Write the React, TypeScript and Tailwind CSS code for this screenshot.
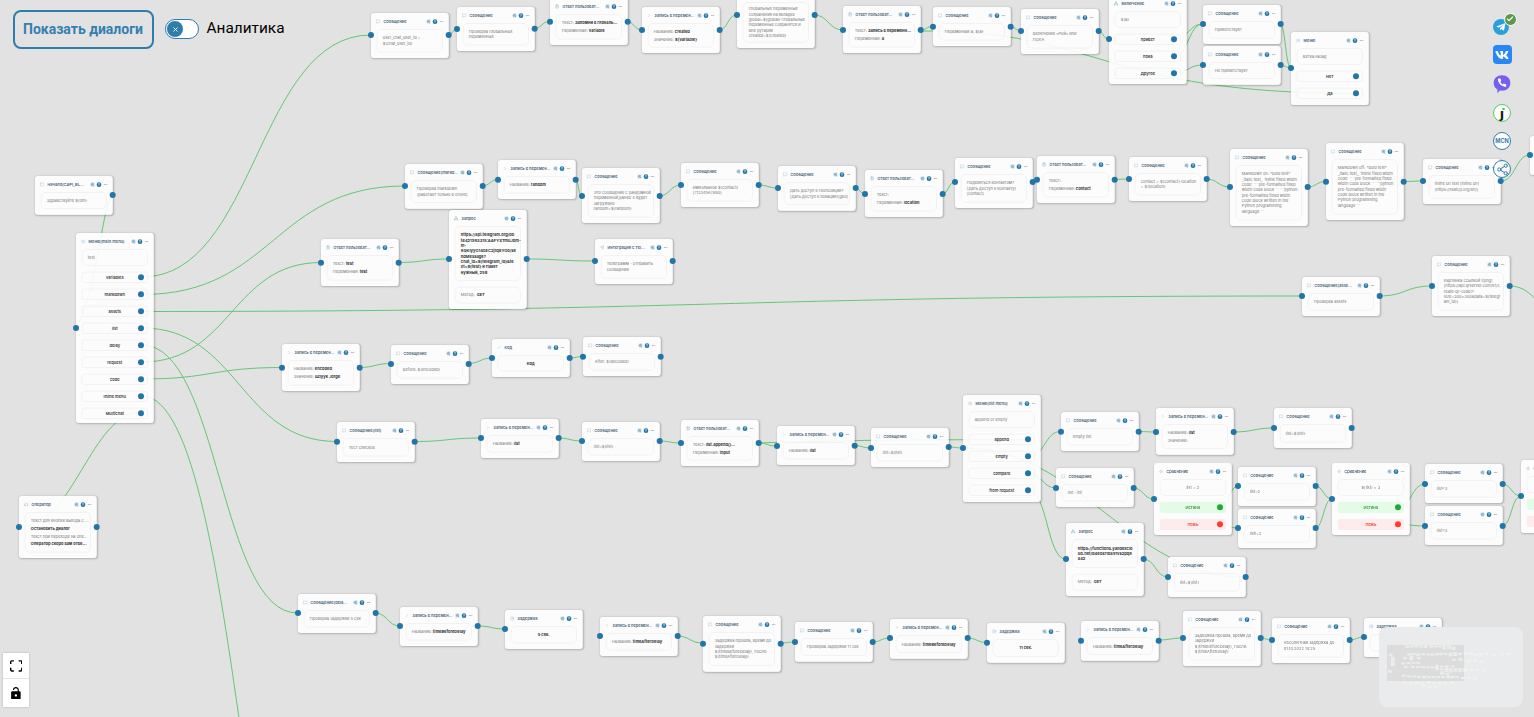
import React from 'react';
import { MessageSquare, ChevronRight, ClipboardList, Network, Check, Zap, Clock, List, Square, SlidersHorizontal, Share2, X, Headphones, Send, Ellipsis } from 'lucide-react';
import { FaTelegramPlane, FaVk } from 'react-icons/fa';

type Row = string | [string, string];
type Btn = { label: string; tone?: 'ok' | 'no' };
type Nd = {
  x: number; y: number; h: number; t: string; i: string;
  l?: number; r?: number;
  b?: Row[]; c?: boolean; strong?: boolean;
  m?: string;
  btn?: Btn[];
};

const N: Nd[] = [
  // top line
  { x: 371, y: 13, h: 45, t: 'Сообщение', i: 'm', l: 35, r: 35, b: ['user_chat_user_id =', '${chat_user_id}'] },
  { x: 457, y: 7, h: 44, t: 'Сообщение', i: 'm', l: 29, r: 28.5, b: ['Проверка глобальных', 'переменных'] },
  { x: 549.5, y: -2, h: 47, t: 'Ответ пользоват...', i: 'a', l: 21.5, r: 21.5, b: [['Текст: ', 'Запомни в глобаль...'], ['Переменная: ', 'variable']] },
  { x: 642, y: 7, h: 46, t: 'Запись в перемен...', i: 'w', l: 30, r: 30, b: [['Название: ', 'created'], ['Значение: ', '${variable}']] },
  { x: 736.5, y: -14, h: 62, t: 'Сообщение', i: 'm', l: 15, r: 15, b: ['глобальных переменных', 'сохранения на вкладке', 'global=${global} глобальные', 'переменные сохранятся и', 'вне рутарии', 'created=${created}'] },
  { x: 843, y: 6, h: 47, t: 'Ответ пользоват...', i: 'a', l: 30, r: 30, b: [['Текст: ', 'Запись в переменн...'], ['Переменная: ', 'a']] },
  { x: 933, y: 7, h: 39, t: 'Сообщение', i: 'm', l: 26.5, r: 26.5, b: ['Переменная a: ${a}'] },
  { x: 1021, y: 9, h: 45, t: 'Сообщение', i: 'm', l: 31, r: 31, b: ['Включение «Рой» или', 'ПОКА'] },
  { x: 1108.5, y: -5, h: 89, t: 'Включение', i: 'n', l: 39, b: ['${a}'], btn: [{ label: 'привет' }, { label: 'пока' }, { label: 'Другое' }] },
  { x: 1203, y: 5, h: 39, t: 'Сообщение', i: 'm', l: 24, r: 24, b: ['Приветствует'] },
  { x: 1203, y: 46, h: 38.5, t: 'Сообщение', i: 'm', l: 65, r: 65, b: ['Не приветствует'] },
  { x: 1291, y: 32, h: 73, t: 'Меню', i: 'l', l: 68, b: ['Ветка назад'], btn: [{ label: 'Нет' }, { label: 'Да' }] },
  // left side
  { x: 34.5, y: 176, h: 38.5, t: 'Начало(CAPI_BL...', i: 's', r: 195, b: ['Здравствуйте ${om}'] },
  { x: 76, y: 233, h: 190, t: 'Меню(main menu)', i: 'l', l: 328, b: ['test'], btn: [{ label: 'variables' }, { label: 'markdown' }, { label: 'assets' }, { label: 'list' }, { label: 'delay' }, { label: 'request' }, { label: 'code' }, { label: 'Inline menu' }, { label: 'Multichat' }] },
  { x: 18.5, y: 496, h: 62, t: 'Оператор', i: 'o', l: 527, r: 527, b: [['Текст для кнопки выхода с ...', ''], ['', 'Остановить диалог'], ['Текст при переходе на опе...', ''], ['', 'Оператор скоро вам отве...']] },
  // markdown row
  { x: 405, y: 164, h: 44.5, t: 'Сообщение(markd...', i: 'm', l: 186, r: 186, b: ['Проверка markdown', '(работает только в отоне)'] },
  { x: 498, y: 160, h: 39, t: 'Запись в перемен...', i: 'w', l: 179.5, r: 179.5, b: [['Название: ', 'random']] },
  { x: 582, y: 168, h: 55, t: 'Сообщение', i: 'm', l: 196, r: 196, b: ['Это сообщение с рандомной', 'переменной,ранее 4 будет', 'загружено', 'random=${random}'] },
  { x: 681, y: 163, h: 44, t: 'Сообщение', i: 'm', l: 185, r: 185, b: ['Имя:Иванов ${contact}', '(71234567890)'] },
  { x: 778, y: 166, h: 44.5, t: 'Сообщение', i: 'm', l: 188, r: 188, b: ['Дать доступ к геопозиции?', '[Дать доступ к локации](geo)'] },
  { x: 865, y: 170, h: 47, t: 'Ответ пользоват...', i: 'a', l: 194, r: 194, b: [['Текст:', ''], ['Переменная: ', 'location']] },
  { x: 955, y: 158, h: 50, t: 'Сообщение', i: 'm', l: 182, r: 182, b: ['Поделиться контактом?', '[Дать доступ к контакту]', '(contact)'] },
  { x: 1037, y: 156, h: 47, t: 'Ответ пользоват...', i: 'a', l: 179.5, r: 179.5, b: [['Текст:', ''], ['Переменная: ', 'contact']] },
  { x: 1129, y: 157, h: 44, t: 'Сообщение', i: 'm', l: 179, r: 179, b: ['contact = ${contact} location', '= ${location}'] },
  { x: 1230, y: 149, h: 77, t: 'Сообщение', i: 'm', l: 187, r: 187, b: ['Markdown on: *bold test*', '_italic test_ `inline fixed width', 'code` ``` pre-formatted fixed', 'width code block ``` ```python', 'pre-formatted fixed width', 'code block written in the', 'Python programming', 'language ```'] },
  { x: 1326, y: 143, h: 77, t: 'Сообщение', i: 'm', l: 181.5, r: 181.5, b: ['Markdown off: *bold test*', '_italic test_ `inline fixed width', 'code` ``` pre-formatted fixed', 'width code block ``` ```python', 'pre-formatted fixed width', 'code block written in the', 'Python programming', 'language ```'] },
  { x: 1423, y: 159, h: 45, t: 'Сообщение', i: 'm', l: 181, r: 181, b: ['inline url test [inline url]', '(https://reatcp.org/en/)'] },
  { x: 1530, y: 136, h: 39, t: '', i: 'e', l: 155, b: [] },
  // request row
  { x: 321, y: 239, h: 47, t: 'Ответ пользоват...', i: 'a', l: 262.5, r: 262.5, b: [['Текст: ', 'test'], ['Переменная: ', 'test']] },
  { x: 448.5, y: 210, h: 99, t: 'Запрос', i: 'n', l: 259, r: 259, strong: true, m: 'GET', b: ['https://api.telegram.org/bo', 't6421983315:AAFYXTmuJbm-', 'm-', '8QKIyyG140EC2j1qSYOo/se', 'ndMessage?', 'chat_id=${telegram_id}&te', 'xt=${test} и Пакет', 'нужный, 25$'] },
  { x: 595, y: 239, h: 45, t: 'Интеграция с Tel...', i: 'p', l: 261, r: 261, b: ['Телеграмм - отправить', 'сообщение'] },
  { x: 1301.5, y: 277, h: 39, t: 'Сообщение(asse...', i: 'm', l: 296, r: 296, b: ['Проверка assets'] },
  { x: 1432, y: 256, h: 60, t: 'Сообщение', i: 'm', l: 286, r: 286, b: ['Картинка ссылкой ![png]', '(https://api.qrserver.com/v1/c', 'reate-qr-code/?', 'size=300x300&data=${telegr', 'am_id})'] },
  // code row
  { x: 282, y: 344, h: 47, t: 'Запись в перемен...', i: 'w', l: 367.5, r: 367.5, b: [['Название: ', 'encoded'], ['Значение: ', 'Шзууk Jorge']] },
  { x: 391, y: 344.5, h: 39, t: 'Сообщение', i: 'm', l: 363.5, r: 363.5, b: ['Before: ${encoded}'] },
  { x: 492, y: 339, h: 38, t: 'Код', i: 'c', l: 358, r: 358, c: true, strong: true, b: ['Код'] },
  { x: 583, y: 337, h: 39, t: 'Сообщение', i: 'm', l: 356.5, r: 356.5, b: ['After: ${decoded}'] },
  // list row
  { x: 337, y: 422, h: 40, t: 'Сообщение(list)', i: 'm', l: 441.5, r: 441.5, b: ['Тест списков'] },
  { x: 481, y: 419, h: 39, t: 'Запись в перемен...', i: 'w', l: 438, r: 438, b: [['Название: ', 'list']] },
  { x: 582, y: 422, h: 39, t: 'Сообщение', i: 'm', l: 441, r: 441, b: ['list=${list}'] },
  { x: 681, y: 420, h: 46, t: 'Ответ пользоват...', i: 'a', l: 443, r: 443, b: [['Текст: ', 'list.append()...'], ['Переменная: ', 'input']] },
  { x: 776.5, y: 426, h: 39, t: 'Запись в перемен...', i: 'w', l: 446, r: 445.5, b: [['Название: ', 'list']] },
  { x: 871, y: 428, h: 39, t: 'Сообщение', i: 'm', l: 448, r: 447, b: ['list=${list}'] },
  { x: 963, y: 395, h: 107, t: 'Меню(list menu)', i: 'l', l: 448, b: ['append or empty'], btn: [{ label: 'append' }, { label: 'empty' }, { label: 'compare' }, { label: 'from request' }] },
  { x: 1060.5, y: 412, h: 39, t: 'Сообщение', i: 'm', l: 431.5, r: 431.5, b: ['empty list'] },
  { x: 1156, y: 408, h: 46.5, t: 'Запись в перемен...', i: 'w', l: 432, r: 432, b: [['Название: ', 'list'], ['Значение:', '']] },
  { x: 1274, y: 408, h: 40, t: 'Сообщение', i: 'm', l: 428, r: 428, b: ['list=${list}'] },
  { x: 1056, y: 468, h: 39, t: 'Сообщение', i: 'm', l: 488, r: 488, b: ['list - int'] },
  { x: 1154, y: 463, h: 72, t: 'Сравнение', i: 'z', l: 499, c: true, b: ['list = 2'], btn: [{ label: 'Истина', tone: 'ok' }, { label: 'Ложь', tone: 'no' }] },
  { x: 1238, y: 467, h: 39, t: 'Сообщение', i: 'm', l: 486, r: 486, b: ['list=2'] },
  { x: 1238, y: 509, h: 39, t: 'Сообщение', i: 'm', l: 528, r: 528, b: ['list!=2'] },
  { x: 1332, y: 463, h: 72, t: 'Сравнение', i: 'z', l: 499, c: true, b: ['${list} < 3'], btn: [{ label: 'Истина', tone: 'ok' }, { label: 'Ложь', tone: 'no' }] },
  { x: 1425, y: 464, h: 39, t: 'Сообщение', i: 'm', l: 484, r: 484, b: ['list<3'] },
  { x: 1425, y: 506, h: 39, t: 'Сообщение', i: 'm', l: 526, r: 526, b: ['list>3'] },
  { x: 1521, y: 460, h: 73, t: 'Сравнение', i: 'z', l: 496, c: true, b: ['list'], btn: [{ label: 'Истина', tone: 'ok' }, { label: 'Ложь', tone: 'no' }] },
  { x: 1065.5, y: 523, h: 73, t: 'Запрос', i: 'n', l: 559, r: 559, strong: true, m: 'GET', b: ['https://functions.yandexclo', 'ud.net/d4eos7lba91vs2pq8', 'a42'] },
  { x: 1168, y: 557, h: 40, t: 'Сообщение', i: 'm', l: 577, r: 577, b: ['list=${list}'] },
  // bottom row
  { x: 297.5, y: 594, h: 39, t: 'Сообщение(dela...', i: 'm', l: 613, r: 613, b: ['Проверка задержки 5 сек'] },
  { x: 400, y: 607, h: 39, t: 'Запись в перемен...', i: 'w', l: 626, r: 626, b: [['Название: ', 'timeBeforeDelay']] },
  { x: 505, y: 610, h: 39, t: 'Задержка', i: 'd', l: 629, c: true, strong: true, b: ['5 сек.'] },
  { x: 600, y: 617, h: 39, t: 'Запись в перемен...', i: 'w', l: 636, r: 636, b: [['Название: ', 'timeAfterDelay']] },
  { x: 702.5, y: 615.5, h: 55.5, t: 'Сообщение', i: 'm', l: 643, r: 643, b: ['Задержка прошла, время до', 'задержки', '${timeBeforeDelay}, после:', '${timeAfterDelay}'] },
  { x: 795, y: 622, h: 39.5, t: 'Сообщение', i: 'm', l: 642, r: 642, b: ['Проверка задержки 11 сек'] },
  { x: 890, y: 619, h: 39.5, t: 'Запись в перемен...', i: 'w', l: 638, r: 638, b: [['Название: ', 'timeBeforeDelay']] },
  { x: 987, y: 623, h: 39.5, t: 'Задержка', i: 'd', l: 642.5, c: true, strong: true, b: ['11 сек.'] },
  { x: 1080.5, y: 620.5, h: 39.5, t: 'Запись в перемен...', i: 'w', l: 640, r: 640, b: [['Название: ', 'timeAfterDelay']] },
  { x: 1183, y: 611, h: 55, t: 'Сообщение', i: 'm', l: 638, r: 638, b: ['Задержка прошла, время до', 'задержки', '${timeBeforeDelay}, после:', '${timeAfterDelay}'] },
  { x: 1272, y: 618, h: 45, t: 'Сообщение', i: 'm', l: 640, r: 640, b: ['Абсолютная задержка до', '01.10.2022 14:25'] },
  { x: 1364, y: 618, h: 39, t: 'Задержка', i: 'd', l: 637, c: true, strong: true, b: ['Н'] },
];

// straight source → target pairs: bezier as drawn by the flow library
const E: [number, number, number, number][] = [
  [142, 277, 371, 35], [142, 294.5, 405, 186], [142, 311.5, 1302, 296], [142, 328, 337, 441.5], [142, 345, 297.5, 613],
  [142, 362, 321, 262.5], [142, 379, 282, 367.5], [142, 396, 350, 1140],
  [448, 35, 457, 29], [534, 28.5, 549.5, 21.5], [626.5, 21.5, 642, 30], [719, 30, 736.5, 15], [814, 15, 843, 30], [920, 30, 933, 26.5],
  [1010, 26.5, 1021, 31], [1098, 31, 1108.5, 39], [1174, 39.5, 1203, 24], [1174, 56, 1203, 24], [1174, 73, 1203, 65], [1280, 24, 1291, 68], [1280, 65, 1291, 68],
  [482, 186, 498, 179.5], [575, 179.5, 582, 196], [659, 196, 681, 185], [758, 185, 778, 188], [855, 188, 865, 194], [942, 194, 955, 182],
  [1032, 182, 1037, 179.5], [1114, 179.5, 1129, 179], [1206, 179, 1230, 187], [1307, 187, 1326, 181.5], [1403, 181.5, 1423, 181], [1501, 181, 1530, 155],
  [398, 262.5, 449, 259], [526, 259, 595, 261], [1379, 296, 1432, 286], [1509, 286, 1560, 310],
  [359, 367.5, 391, 363.5], [468, 363.5, 492, 358], [569.5, 358, 583, 356.5],
  [414, 441.5, 481, 438], [558, 438, 582, 441], [659, 441, 681, 443], [758, 443, 776.5, 446], [854, 445.5, 871, 448], [948, 447, 963, 448],
  [1029, 456.7, 1060.5, 431.5], [1029, 473.7, 1056, 488], [1029, 490.7, 1065.5, 559],
  [1138, 431.5, 1156, 432], [1233, 432, 1274, 428], [1133, 488, 1154, 499], [1220, 507.5, 1238, 486], [1220, 524.5, 1238, 528],
  [1315, 486, 1332, 499], [1315, 528, 1332, 499], [1398, 507.5, 1425, 484], [1398, 524.5, 1425, 526], [1502, 484, 1521, 496], [1502, 526, 1521, 496], [1143, 559, 1168, 577],
  [375, 613, 400, 626], [478, 626, 505, 629], [677, 636, 702.5, 643], [780, 643, 795, 642], [872, 642, 890, 638], [967, 638, 987, 642.5],
  [1158, 640, 1183, 638], [1260, 638, 1272, 640], [1349, 640, 1364, 637],
];

// edges that run back across the canvas
const BACK = [
  'M142,412 C90,412 75,527 18.5,527',
  'M112,195 C100,215 98,290 76,328',
  'M1357,93.5 C1100,93.5 1100,30 920,31',
  'M1029,439.7 C900,439.7 850,440 758,443',
  'M1245,577 C1130,577 1080,448 963,448',
];

function bez([sx, sy, tx, ty]: [number, number, number, number]) {
  const d = Math.abs(tx - sx) * 0.5;
  return `M${sx},${sy} C${sx + d},${sy} ${tx - d},${ty} ${tx},${ty}`;
}

const ICONS: Record<string, React.ElementType> = {
  m: MessageSquare, w: ChevronRight, a: ClipboardList, n: Network, c: Check, z: Zap, d: Clock, l: List, s: Square, o: Headphones, p: Send, e: Square,
};

// Nodes are laid out at 3× inside a wrapper scaled to one third, as a zoomed-out flow canvas does.
function Port({ top, left }: { top: number; left: number }) {
  return <span className="absolute w-[18px] h-[18px] rounded-full bg-[#2076a9] -translate-x-1/2 -translate-y-1/2 z-10" style={{ top, left }} />;
}

function Box({ n }: { n: Nd }) {
  return (
    <div className={`${n.btn ? 'h-[51px] shrink-0' : 'flex-1 min-h-0'} rounded-[15px] border-[3px] border-[#f2f2f2] px-[16px] flex flex-col justify-center ${n.c ? 'items-center' : ''}`}>
      {n.b?.map((row, k) =>
        typeof row === 'string' ? (
          <div key={k} className={`leading-[16px] whitespace-nowrap ${n.strong ? 'font-bold text-[#333]' : 'text-[#777]'}`}>{row}</div>
        ) : (
          <div key={k} className="leading-[23px] whitespace-nowrap text-[#777]">
            {row[0]}<b className="font-bold text-[#333]">{row[1]}</b>
          </div>
        ),
      )}
    </div>
  );
}

function Node({ n }: { n: Nd }) {
  const Icon = ICONS[n.i];
  return (
    <div
      className="absolute w-[232.5px] origin-top-left scale-[0.33333] rounded-[9px] bg-white/90 shadow-[3px_3px_6px_rgba(0,0,0,0.22)] flex flex-col text-[12px]"
      style={{ left: n.x, top: n.y, height: n.h * 3 }}
    >
      <div className="h-[48px] shrink-0 flex items-center pt-[3px] pl-[15px] pr-[15px] gap-[9px]">
        <Icon size={13} className="text-[#8fb2c8] shrink-0" strokeWidth={2} />
        <span className="flex-1 min-w-0 font-semibold text-[#4b6475] whitespace-nowrap overflow-hidden">{n.t}</span>
        <SlidersHorizontal size={13} className="text-[#3a7ea8] shrink-0" strokeWidth={2.5} />
        <span className="w-[14px] h-[14px] rounded-full bg-[#2076a9] text-white text-[9px] font-bold leading-[14px] text-center shrink-0 ml-[-3px]">?</span>
        <Ellipsis size={13} className="text-[#9a9a9a] shrink-0 ml-[-3px]" />
      </div>
      <div className="flex-1 min-h-0 flex flex-col gap-[16.5px] px-[16.5px] pb-[16.5px]">
        <Box n={n} />
        {n.m && (
          <div className="h-[51px] shrink-0 rounded-[15px] border-[3px] border-[#f2f2f2] px-[16px] flex items-center text-[#777]">
            Метод: <b className="font-bold text-[#333] ml-[6px]">{n.m}</b>
          </div>
        )}
        {n.btn?.map((b) => (
          <div
            key={b.label}
            className={`relative h-[34.5px] shrink-0 rounded-[8px] flex items-center justify-center font-semibold ${
              b.tone === 'ok'
                ? 'bg-[#e4fbe6] text-[#3a9a4a]'
                : b.tone === 'no'
                  ? 'bg-[#feecec] text-[#f04a40]'
                  : 'border-[3px] border-[#f2f2f2] text-[#333]'
            }`}
          >
            {b.label}
            <span
              className={`absolute right-[9px] top-1/2 -translate-y-1/2 w-[18px] h-[18px] rounded-full ${
                b.tone === 'ok' ? 'bg-[#22a83a]' : b.tone === 'no' ? 'bg-[#ff3b30]' : 'bg-[#2076a9]'
              }`}
            />
          </div>
        ))}
      </div>
      {n.l !== undefined && <Port top={(n.l - n.y) * 3} left={0} />}
      {n.r !== undefined && <Port top={(n.r - n.y) * 3} left={232.5} />}
    </div>
  );
}

const EXTRA: [number, number, number, number][] = [
  [1540, 150, 77, 40], [1640, 140, 77, 60], [1740, 170, 77, 45], [1840, 160, 77, 50], [1950, 150, 77, 40], [2100, 180, 77, 50], [2260, 170, 77, 40], [2400, 160, 77, 45],
  [1600, 300, 77, 50], [1720, 290, 77, 40], [1850, 310, 77, 40], [1540, 470, 77, 60], [1660, 480, 77, 40], [1780, 470, 77, 40], [1900, 490, 77, 40],
  [320, 730, 77, 40], [430, 750, 77, 40], [540, 735, 77, 45], [660, 750, 77, 40], [790, 730, 77, 40], [900, 745, 77, 40], [1020, 735, 77, 45], [1140, 750, 77, 40], [1260, 730, 77, 40],
  [700, 800, 77, 40], [820, 820, 77, 40], [940, 810, 77, 40], [1480, 640, 77, 40], [1600, 630, 77, 40], [1720, 650, 77, 40],
];

function MiniMap() {
  const k = 0.05;
  return (
    <div className="absolute left-[1379px] top-[627px] w-[144px] h-[80px] rounded-[8px] bg-[#e9ebed] z-20 overflow-hidden">
      <svg width="144" height="80" viewBox="0 0 144 80">
        <rect x="8" y="18" width="77" height="36" fill="#dcdcdc" />
        {N.map((n, i) => (
          <rect key={i} x={8 + n.x * k} y={18 + Math.max(n.y, 0) * k} width={77.5 * k} height={n.h * k} fill="#ebecec" />
        ))}
        {EXTRA.map(([x, y, w, h], i) => (
          <rect key={i} x={8 + x * k} y={18 + y * k} width={w * k} height={h * k} fill="#f0f1f2" />
        ))}
      </svg>
    </div>
  );
}

function Controls() {
  return (
    <div className="absolute left-[3px] top-[653px] w-[26px] h-[54px] bg-white shadow-[0_0_2px_rgba(0,0,0,0.2)] flex flex-col z-20">
      <div className="h-[26px] flex items-center justify-center border-b border-[#e4e4e4]">
        <svg width="12.5" height="12" viewBox="0 0 32 30" fill="#000">
          <path d="M3.692 4.63c0-.53.4-.938.939-.938h5.215V0H4.708C2.13 0 0 2.054 0 4.63v5.216h3.692V4.631zM27.354 0h-5.2v3.692h5.17c.53 0 .984.4.984.939v5.215H32V4.631A4.624 4.624 0 0027.354 0zm.954 24.83c0 .532-.4.94-.939.94h-5.215v3.768h5.215c2.577 0 4.631-2.13 4.631-4.707v-5.139h-3.692v5.139zm-23.677.94c-.531 0-.939-.4-.939-.94v-5.138H0v5.139c0 2.577 2.13 4.707 4.708 4.707h5.138V25.77H4.631z" />
        </svg>
      </div>
      <div className="flex-1 flex items-center justify-center">
        <svg width="10" height="12.5" viewBox="0 0 25 32" fill="#000">
          <path d="M21.333 10.667H19.81V7.619C19.81 3.429 16.38 0 12.19 0c-4.114 0-7.62 3.429-7.62 7.619h3.047c0-2.59 2.134-4.572 4.573-4.572 2.438 0 4.571 1.982 4.571 4.572v3.048H3.048A3.056 3.056 0 000 13.714v15.238A3.056 3.056 0 003.048 32h18.285a3.056 3.056 0 003.048-3.048V13.714a3.056 3.056 0 00-3.048-3.047zM12.19 24.533a3.056 3.056 0 01-3.047-3.047 3.056 3.056 0 013.047-3.048 3.056 3.056 0 013.048 3.048 3.056 3.056 0 01-3.048 3.047z" />
        </svg>
      </div>
    </div>
  );
}

function Socials() {
  return (
    <div className="absolute left-[1493px] top-[19px] w-[18px] flex flex-col items-center gap-[10px] z-20">
      <div className="relative self-start w-[16px] h-[16px] rounded-full bg-[#2b9fdb] flex items-center justify-center">
        <FaTelegramPlane size={10} className="text-white" />
        <span className="absolute -top-[6.5px] left-[10.5px] w-[13px] h-[13px] rounded-full bg-[#5c9a4a] border border-white flex items-center justify-center">
          <Check size={8} className="text-white" strokeWidth={3.5} />
        </span>
      </div>
      <div className="w-[19px] h-[19px] rounded-[4px] bg-[#2787f5] flex items-center justify-center">
        <FaVk size={14} className="text-white" />
      </div>
      <svg width="20" height="20" viewBox="0 0 24 24">
        <path fill="#7360f2" d="M12 1.5c5.8 0 10 3.600 10 9.300S17.800 20 12 20c-.9 0-1.700-.1-2.500-.2L6.500 23v-4.400C3.500 17 2 14.300 2 10.800 2 5.100 6.200 1.500 12 1.500z" />
        <path fill="#fff" transform="translate(6,4.500) scale(0.5)" d="M22 16.920v3a2 2 0 0 1-2.180 2 19.790 19.790 0 0 1-8.630-3.070 19.500 19.500 0 0 1-6-6 19.790 19.790 0 0 1-3.070-8.670A2 2 0 0 1 4.110 2h3a2 2 0 0 1 2 1.720 12.840 12.840 0 0 0 .7 2.810 2 2 0 0 1-.45 2.110L8.090 9.910a16 16 0 0 0 6 6l1.270-1.270a2 2 0 0 1 2.110-.45 12.840 12.840 0 0 0 2.810.7A2 2 0 0 1 22 16.920z" />
      </svg>
      <div className="relative w-[18px] h-[18px] rounded-full bg-white border border-[#4ccf5f] flex items-center justify-center font-['DejaVu_Sans',sans-serif] font-bold text-[13px] leading-none text-[#1b1b1b]">
        ȷ
        <span className="absolute left-[8px] top-[2.5px] w-[2.5px] h-[2.5px] rounded-full bg-[#4ccf5f]" />
      </div>
      <div className="w-[18px] h-[18px] rounded-full bg-white border border-[#2f7dac] flex items-center justify-center font-['Inter',sans-serif] font-bold text-[5.6px] text-[#2f7dac]">
        MCN
      </div>
      <div className="w-[18px] h-[18px] rounded-full bg-white/80 border border-[#2f7dac] flex items-center justify-center">
        <Share2 size={13} className="text-[#2f7dac]" strokeWidth={1.8} />
      </div>
    </div>
  );
}

export default function App() {
  return (
    <div className="relative w-[1534px] h-[717px] overflow-hidden bg-[#e2e2e2] bg-[radial-gradient(#d2d2d2_0.6px,transparent_0.7px)] bg-[size:16px_16px] font-['Inter','Liberation_Sans',sans-serif]">
      <svg className="absolute inset-0" width="1534" height="717" fill="none" stroke="#62c874" strokeWidth="1">
        {E.map((e, i) => <path key={i} d={bez(e)} />)}
        {BACK.map((d, i) => <path key={i} d={d} />)}
      </svg>

      {N.map((n, i) => <Node key={i} n={n} />)}

      <div className="absolute left-[12.5px] top-[9.5px] flex items-center z-20">
        <button className="w-[141px] h-[39px] rounded-[8px] border-2 border-[#2f7dab] text-[#347fae] text-[14px] font-bold font-['Roboto',sans-serif] whitespace-nowrap">
          Показать диалоги
        </button>
        <div className="ml-[11px] w-[34px] h-[20px] rounded-full bg-white border border-[#2f7dab] flex items-center pl-[1.5px]">
          <span className="w-[16px] h-[16px] rounded-full bg-[#2f7dab] flex items-center justify-center">
            <X size={7} className="text-white" strokeWidth={3} />
          </span>
        </div>
        <span className="ml-[8px] text-[15.4px] text-black font-['Roboto',sans-serif]">Аналитика</span>
      </div>

      <Socials />
      <MiniMap />
      <Controls />
    </div>
  );
}
